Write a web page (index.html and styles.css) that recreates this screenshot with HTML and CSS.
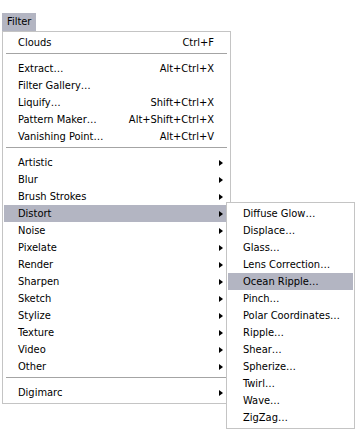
FILE: index.html
```html
<!DOCTYPE html>
<html lang="en">
  <head>
    <meta charset="utf-8">
    <meta name="viewport" content="width=device-width, initial-scale=1.0">
    <title>Filter Menu</title>
    <link rel="stylesheet" href="styles.css">
  </head>

  <body>
    <div class="menubar">
      <span class="menu-title">Filter</span>
    </div>
    <ul class="menu">
      <li class="item"><span>Clouds</span><span class="key">Ctrl+F</span></li>
      <li class="sep"></li>
      <li class="item"><span>Extract…</span><span class="key">Alt+Ctrl+X</span></li>
      <li class="item"><span>Filter Gallery…</span></li>
      <li class="item"><span>Liquify…</span><span class="key">Shift+Ctrl+X</span></li>
      <li class="item"><span>Pattern Maker…</span><span class="key">Alt+Shift+Ctrl+X</span></li>
      <li class="item"><span>Vanishing Point…</span><span class="key">Alt+Ctrl+V</span></li>
      <li class="sep"></li>
      <li class="item sub"><span>Artistic</span><i class="arrow"></i></li>
      <li class="item sub"><span>Blur</span><i class="arrow"></i></li>
      <li class="item sub"><span>Brush Strokes</span><i class="arrow"></i></li>
      <li class="item sub active open">
        <span>Distort</span><i class="arrow"></i>
        <ul class="menu submenu">
          <li class="item"><span>Diffuse Glow…</span></li>
          <li class="item"><span>Displace…</span></li>
          <li class="item"><span>Glass…</span></li>
          <li class="item"><span>Lens Correction…</span></li>
          <li class="item active"><span>Ocean Ripple…</span></li>
          <li class="item"><span>Pinch…</span></li>
          <li class="item"><span>Polar Coordinates…</span></li>
          <li class="item"><span>Ripple…</span></li>
          <li class="item"><span>Shear…</span></li>
          <li class="item"><span>Spherize…</span></li>
          <li class="item"><span>Twirl…</span></li>
          <li class="item"><span>Wave…</span></li>
          <li class="item"><span>ZigZag…</span></li>
        </ul>
      </li>
      <li class="item sub"><span>Noise</span><i class="arrow"></i></li>
      <li class="item sub"><span>Pixelate</span><i class="arrow"></i></li>
      <li class="item sub"><span>Render</span><i class="arrow"></i></li>
      <li class="item sub"><span>Sharpen</span><i class="arrow"></i></li>
      <li class="item sub"><span>Sketch</span><i class="arrow"></i></li>
      <li class="item sub"><span>Stylize</span><i class="arrow"></i></li>
      <li class="item sub"><span>Texture</span><i class="arrow"></i></li>
      <li class="item sub"><span>Video</span><i class="arrow"></i></li>
      <li class="item sub"><span>Other</span><i class="arrow"></i></li>
      <li class="sep"></li>
      <li class="item sub"><span>Digimarc</span><i class="arrow"></i></li>
    </ul>
  </body>
</html>
```

FILE: styles.css
```css
* {
margin: 0;
padding: 0;
box-sizing: border-box;
font-family: "DejaVu Sans Condensed", "DejaVu Sans", sans-serif;
}

html, body {
min-height: 100vh;
}

body {
background: #fff;
color: #000;
font-size: 11px;
}

.menubar {
display: flex;
padding: 13px 0 0 2px;
}

.menu-title {
height: 18px;
width: 34px;
padding-left: 5px;
line-height: 18px;
background: #b3b5c2;
}

.menu {
list-style: none;
width: 229px;
margin-left: 2px;
padding: 2px 1px;
border: 1px solid #c4c4c4;
background: #fff;
}

.menu .item {
display: flex;
align-items: center;
justify-content: space-between;
height: 17px;
padding: 0 15px 0 14px;
position: relative;
white-space: nowrap;
}

.menu .item.active {
background: #b3b5c2;
}

.menu .sep {
height: 9px;
padding: 2px 2px 0;
}

.menu .sep::before {
content: "";
display: block;
height: 1px;
background: #a4a4a4;
}

.menu .arrow {
margin-right: -9px;
border-left: 4px solid #000;
border-top: 3.5px solid transparent;
border-bottom: 3.5px solid transparent;
}

.submenu {
position: absolute;
top: -3px;
left: 222px;
width: 129px;
margin: 0;
z-index: 2;
}

.submenu .item {
padding-left: 15px;
}
```
